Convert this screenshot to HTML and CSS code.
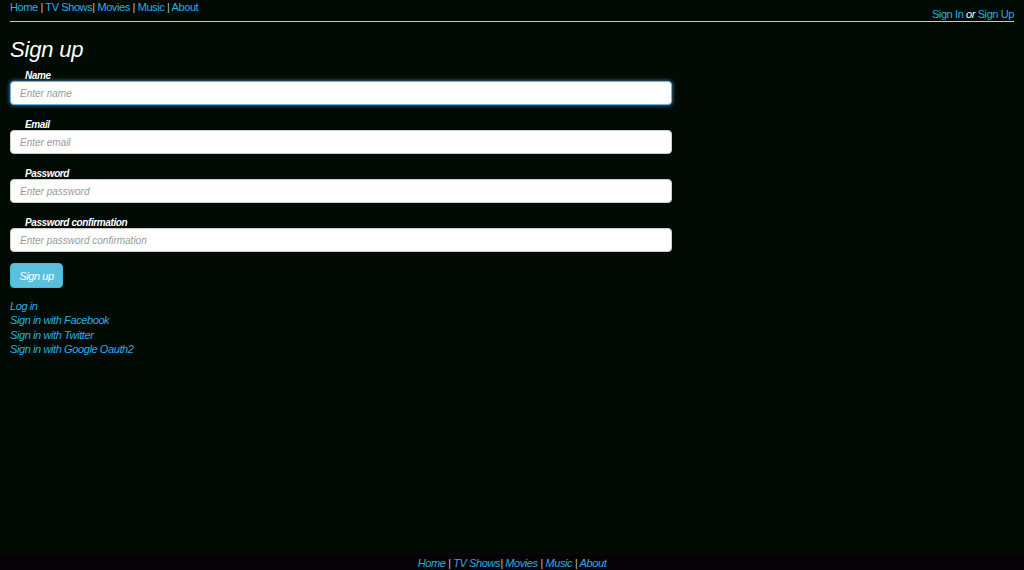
FILE: index.html
```html
<!DOCTYPE html>
<html>
<head>
<meta charset="utf-8">
<title>Sign up</title>
<link rel="stylesheet" href="styles.css">
</head>
<body>
<div class="page">
  <header class="topbar">
    <nav class="mainnav"><a href="#">Home</a> | <a href="#">TV Shows</a>| <a href="#">Movies</a> | <a href="#">Music</a> | <a href="#">About</a></nav>
    <div class="account"><a href="#">Sign In</a> <em>or</em> <a href="#">Sign Up</a></div>
  </header>
  <main class="content">
    <h1 class="title">Sign up</h1>
    <form class="form">
      <div class="field">
        <label class="label">Name</label>
        <input class="input input-focus" type="text" placeholder="Enter name">
      </div>
      <div class="field">
        <label class="label">Email</label>
        <input class="input" type="text" placeholder="Enter email">
      </div>
      <div class="field">
        <label class="label">Password</label>
        <input class="input" type="password" placeholder="Enter password">
      </div>
      <div class="field">
        <label class="label">Password confirmation</label>
        <input class="input" type="password" placeholder="Enter password confirmation">
      </div>
      <button class="btn" type="button">Sign up</button>
    </form>
    <div class="links">
      <a href="#">Log in</a>
      <a href="#">Sign in with Facebook</a>
      <a href="#">Sign in with Twitter</a>
      <a href="#">Sign in with Google Oauth2</a>
    </div>
  </main>
  <footer class="footer">
    <a href="#">Home</a> | <a href="#">TV Shows</a>| <a href="#">Movies</a> | <a href="#">Music</a> | <a href="#">About</a>
  </footer>
</div>
</body>
</html>
```
FILE: styles.css
```css
html, body {
  margin: 0;
  padding: 0;
  background: #020a04;
  height: 100%;
}
body {
  font-family: "Liberation Sans", Arial, sans-serif;
  font-size: 11px;
  letter-spacing: -0.4px;
  color: #ffffff;
}
a {
  color: #2aaee4;
  text-decoration: none;
}
.page {
  min-height: 100vh;
  display: flex;
  flex-direction: column;
}
.topbar {
  margin: 0 10px;
  height: 21px;
  border-bottom: 1px solid #c8c8c8;
  display: flex;
  justify-content: space-between;
  color: #bfbfbf;
}
.mainnav {
  align-self: flex-start;
  line-height: 15px;
}
.account {
  align-self: flex-end;
  line-height: 14px;
  color: #ffffff;
}
.account em {
  font-style: italic;
}
.content {
  flex: 1;
  padding: 0 10px;
  font-style: italic;
}
.title {
  margin: 14px 0 0 0;
  font-size: 22px;
  font-weight: normal;
  font-style: italic;
  line-height: 28px;
  letter-spacing: -0.2px;
}
.form {
  display: flex;
  flex-direction: column;
  margin: 5px 0 0 0;
}
.field {
  display: flex;
  flex-direction: column;
  margin-bottom: 14px;
}
.label {
  font-size: 10px;
  font-weight: bold;
  font-style: italic;
  padding-left: 15px;
  line-height: 11px;
  margin-top: 1px;
  color: #ffffff;
}
.field + .field .label {
  margin-top: 0;
}
.input {
  width: 662px;
  height: 24px;
  box-sizing: border-box;
  border: 1px solid #cccccc;
  border-radius: 4px;
  background: #ffffff;
  padding: 0 9px;
  font-family: "Liberation Sans", Arial, sans-serif;
  font-size: 10px;
  font-style: italic;
  color: #555;
  outline: none;
}
.input::placeholder {
  color: #9a9a9a;
  font-style: italic;
}
.input-focus {
  border-color: #66afe9;
  box-shadow: 0 0 4px rgba(102, 175, 233, 0.8);
}
.btn {
  align-self: flex-start;
  width: 53px;
  height: 25px;
  margin-top: -3px;
  background: #5bc0de;
  border: 1px solid #46b8da;
  border-radius: 4px;
  color: #ffffff;
  font-family: "Liberation Sans", Arial, sans-serif;
  font-size: 11px;
  font-style: italic;
  letter-spacing: -0.4px;
  padding: 0;
}
.links {
  display: flex;
  flex-direction: column;
  align-items: flex-start;
  margin-top: 11px;
  line-height: 14.3px;
}
.footer {
  background: #050305;
  height: 15px;
  line-height: 16px;
  text-align: center;
  font-style: italic;
  color: #bfbfbf;
}
```
